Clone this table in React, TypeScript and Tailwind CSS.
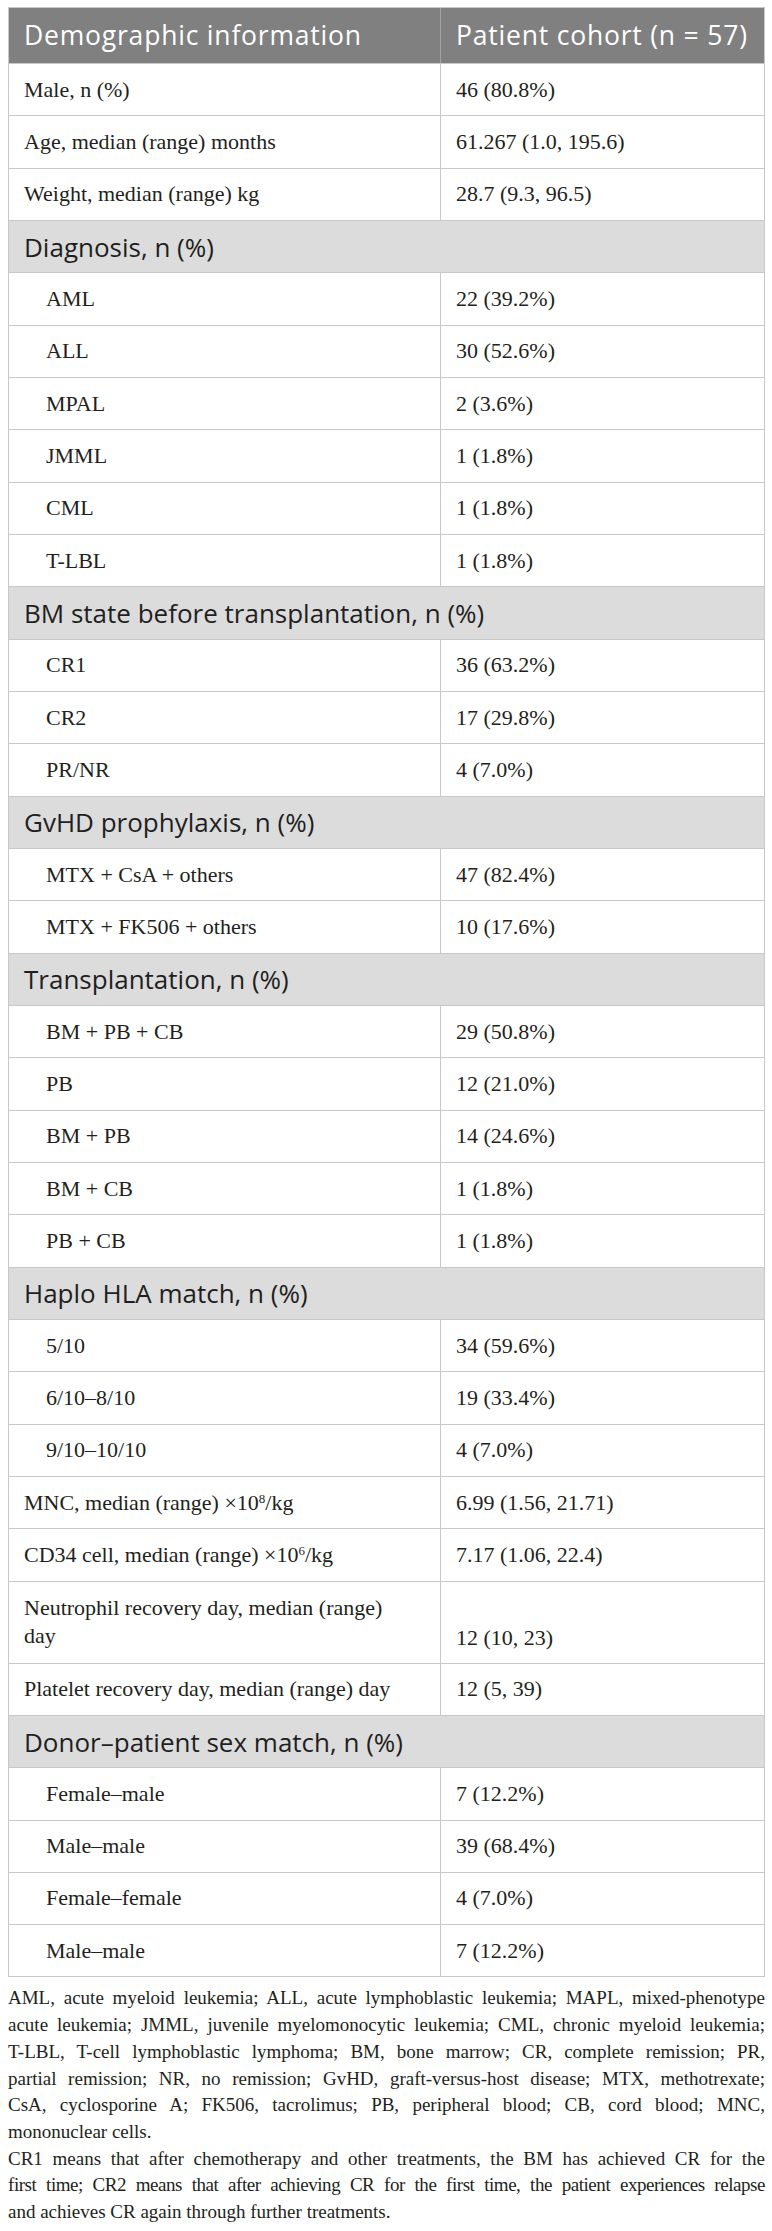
import type { ReactNode } from "react";

type Row =
  | { kind: "group"; label: string }
  | { kind: "row"; label: ReactNode; value: string; indent?: boolean; tall?: boolean };

const rows: Row[] = [
  { kind: "row", label: "Male, n (%)", value: "46 (80.8%)" },
  { kind: "row", label: "Age, median (range) months", value: "61.267 (1.0, 195.6)" },
  { kind: "row", label: "Weight, median (range) kg", value: "28.7 (9.3, 96.5)" },
  { kind: "group", label: "Diagnosis, n (%)" },
  { kind: "row", label: "AML", value: "22 (39.2%)", indent: true },
  { kind: "row", label: "ALL", value: "30 (52.6%)", indent: true },
  { kind: "row", label: "MPAL", value: "2 (3.6%)", indent: true },
  { kind: "row", label: "JMML", value: "1 (1.8%)", indent: true },
  { kind: "row", label: "CML", value: "1 (1.8%)", indent: true },
  { kind: "row", label: "T-LBL", value: "1 (1.8%)", indent: true },
  { kind: "group", label: "BM state before transplantation, n (%)" },
  { kind: "row", label: "CR1", value: "36 (63.2%)", indent: true },
  { kind: "row", label: "CR2", value: "17 (29.8%)", indent: true },
  { kind: "row", label: "PR/NR", value: "4 (7.0%)", indent: true },
  { kind: "group", label: "GvHD prophylaxis, n (%)" },
  { kind: "row", label: "MTX + CsA + others", value: "47 (82.4%)", indent: true },
  { kind: "row", label: "MTX + FK506 + others", value: "10 (17.6%)", indent: true },
  { kind: "group", label: "Transplantation, n (%)" },
  { kind: "row", label: "BM + PB + CB", value: "29 (50.8%)", indent: true },
  { kind: "row", label: "PB", value: "12 (21.0%)", indent: true },
  { kind: "row", label: "BM + PB", value: "14 (24.6%)", indent: true },
  { kind: "row", label: "BM + CB", value: "1 (1.8%)", indent: true },
  { kind: "row", label: "PB + CB", value: "1 (1.8%)", indent: true },
  { kind: "group", label: "Haplo HLA match, n (%)" },
  { kind: "row", label: "5/10", value: "34 (59.6%)", indent: true },
  { kind: "row", label: "6/10–8/10", value: "19 (33.4%)", indent: true },
  { kind: "row", label: "9/10–10/10", value: "4 (7.0%)", indent: true },
  {
    kind: "row",
    label: (
      <>
        MNC, median (range) ×10<sup className="text-[13px]">8</sup>/kg
      </>
    ),
    value: "6.99 (1.56, 21.71)",
  },
  {
    kind: "row",
    label: (
      <>
        CD34 cell, median (range) ×10<sup className="text-[13px]">6</sup>/kg
      </>
    ),
    value: "7.17 (1.06, 22.4)",
  },
  {
    kind: "row",
    label: (
      <>
        Neutrophil recovery day, median (range)
        <br />
        day
      </>
    ),
    value: "12 (10, 23)",
    tall: true,
  },
  { kind: "row", label: "Platelet recovery day, median (range) day", value: "12 (5, 39)" },
  { kind: "group", label: "Donor–patient sex match, n (%)" },
  { kind: "row", label: "Female–male", value: "7 (12.2%)", indent: true },
  { kind: "row", label: "Male–male", value: "39 (68.4%)", indent: true },
  { kind: "row", label: "Female–female", value: "4 (7.0%)", indent: true },
  { kind: "row", label: "Male–male", value: "7 (12.2%)", indent: true },
];

const notes: { text: string; last?: boolean; tight?: boolean }[] = [
  { text: "AML, acute myeloid leukemia; ALL, acute lymphoblastic leukemia; MAPL, mixed-phenotype" },
  { text: "acute leukemia; JMML, juvenile myelomonocytic leukemia; CML, chronic myeloid leukemia;" },
  { text: "T-LBL, T-cell lymphoblastic lymphoma; BM, bone marrow; CR, complete remission; PR," },
  { text: "partial remission; NR, no remission; GvHD, graft-versus-host disease; MTX, methotrexate;" },
  { text: "CsA, cyclosporine A; FK506, tacrolimus; PB, peripheral blood; CB, cord blood; MNC," },
  { text: "mononuclear cells.", last: true },
  { text: "CR1 means that after chemotherapy and other treatments, the BM has achieved CR for the" },
  {
    text: "first time; CR2 means that after achieving CR for the first time, the patient experiences relapse",
    tight: true,
  },
  { text: "and achieves CR again through further treatments.", last: true },
];

const sans = "font-['Open_Sans',sans-serif]";
const serif = "font-['Liberation_Serif',serif]";

export default function App() {
  return (
    <div className="min-h-[2231px] bg-white pt-[7px] text-[#231f20]">
      <div className="ml-2 w-[757px] border border-[#c8c8c8]">
        <div
          className={`flex h-[55px] bg-[#808080] text-[26.5px] leading-none tracking-[0.8px] text-white ${sans}`}
        >
          <div className="flex w-[432px] items-center border-r border-[#a3a3a3] pl-[15px]">
            Demographic information
          </div>
          <div className="flex flex-1 items-center pl-[15px]">Patient cohort (n = 57)</div>
        </div>

        {rows.map((row, i) =>
          row.kind === "group" ? (
            <div
              key={i}
              className={`flex h-[52.33px] items-center border-t border-[#c8c8c8] bg-[#dcdcdc] pl-[15px] text-[26px] leading-none text-[#1f1f1f] ${sans}`}
            >
              {row.label}
            </div>
          ) : (
            <div
              key={i}
              className={`flex border-t border-[#c8c8c8] text-[22px] leading-[28px] ${serif} ${
                row.tall ? "h-[82px]" : "h-[52.33px]"
              }`}
            >
              <div
                className={`flex w-[432px] items-center whitespace-nowrap border-r border-[#c8c8c8] pr-2 ${
                  row.indent ? "pl-[37px]" : "pl-[15px]"
                }`}
              >
                <span>{row.label}</span>
              </div>
              <div
                className={`flex flex-1 pl-[15px] ${row.tall ? "items-end pb-[11px]" : "items-center"}`}
              >
                {row.value}
              </div>
            </div>
          ),
        )}
      </div>

      <div className={`ml-2 mt-[8px] w-[757px] text-[19px] leading-[26.7px] ${serif}`}>
        {notes.map((n, i) => (
          <div
            key={i}
            className={`whitespace-nowrap ${n.last ? "text-left" : "text-justify [text-align-last:justify]"} ${
              n.tight ? "tracking-[-0.45px]" : ""
            }`}
          >
            {n.text}
          </div>
        ))}
      </div>
    </div>
  );
}
